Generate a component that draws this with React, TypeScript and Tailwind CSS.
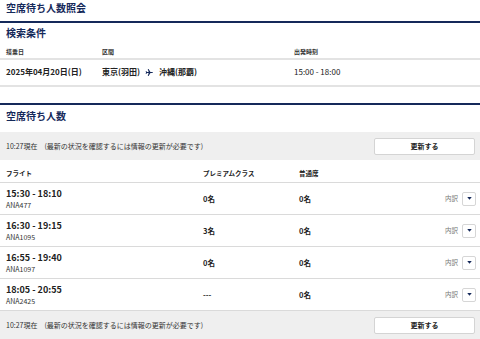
import React from "react";

const NAVY = "#15295a";

function Plane() {
  return (
    <svg width="9" height="9" viewBox="0 0 24 24" className="mx-[5px]" aria-hidden>
      <path
        fill={NAVY}
        d="M21 12c0-.9-.8-1.4-1.6-1.4H14.6L9.4 2.5H7.3l2.5 8.1H5L3.4 8.2H1.8l1 3.8-1 3.8h1.6L5 13.4h4.8l-2.5 8.1h2.1l5.2-8.1h4.8c.8 0 1.6-.5 1.6-1.4z"
      />
    </svg>
  );
}

function Caret() {
  return (
    <div className="w-[14px] h-[14px] border border-[#d6d6d6] rounded-[2px] bg-white flex items-center justify-center">
      <svg width="5" height="3" viewBox="0 0 6 4" aria-hidden>
        <path d="M0 0h6L3 3.5z" fill={NAVY} />
      </svg>
    </div>
  );
}

function UpdateBar() {
  return (
    <div className="h-[28px] bg-[#efefef] flex items-center justify-between pl-[6px] pr-[5px]">
      <span className="text-[7px] leading-[8px] text-[#333]">
        10:27現在　(最新の状況を確認するには情報の更新が必要です)
      </span>
      <button className="w-[101px] h-[17px] bg-white border border-[#d4d4d4] rounded-[2px] text-[7px] font-bold text-[#222] flex items-center justify-center">
        更新する
      </button>
    </div>
  );
}

const rows = [
  { time: "15:30 - 18:10", no: "ANA477", p: "0名", n: "0名" },
  { time: "16:30 - 19:15", no: "ANA1095", p: "3名", n: "0名" },
  { time: "16:55 - 19:40", no: "ANA1097", p: "0名", n: "0名" },
  { time: "18:05 - 20:55", no: "ANA2425", p: "---", n: "0名" },
];

export default function App() {
  return (
    <div
      className="w-[480px] h-[339px] overflow-hidden bg-white text-[#222]"
      style={{ fontFamily: '"Noto Sans CJK JP", "Noto Sans", sans-serif' }}
    >
      <div className="h-[21px] pt-[2px] pl-[6px] text-[10px] leading-[12px] font-bold text-[#15295a]">
        空席待ち人数照会
      </div>
      <div className="h-[2px] bg-[#15295a]" />
      <div className="pt-[4px] pl-[6px] text-[10px] leading-[12px] font-bold text-[#15295a]">
        検索条件
      </div>
      <div className="flex pl-[6px] mt-[9px] h-[10px] text-[6px] leading-[8px] font-bold text-[#333]">
        <span className="w-[96px] shrink-0">搭乗日</span>
        <span className="w-[192px] shrink-0">区間</span>
        <span>出発時刻</span>
      </div>
      <div className="h-[2px] bg-[#e3e3e3]" />
      <div className="flex pl-[6px] pt-[7px] pb-[8px] text-[8px] leading-[10px]">
        <span className="w-[96px] shrink-0 font-bold">2025年04月20日(日)</span>
        <span className="w-[192px] shrink-0 font-bold flex items-center">
          東京(羽田)
          <Plane />
          沖縄(那覇)
        </span>
        <span>15:00 - 18:00</span>
      </div>
      <div className="h-[2px] bg-[#e3e3e3]" />
      <div className="h-[16px]" />
      <div className="h-[2px] bg-[#15295a]" />
      <div className="pt-[5px] pl-[6px] text-[10px] leading-[12px] font-bold text-[#15295a]">
        空席待ち人数
      </div>
      <div className="mt-[10px]">
        <UpdateBar />
      </div>
      <div className="flex pl-[6px] h-[23px] pt-[9px] border-b border-[#dadada] text-[6.5px] leading-[8px] font-bold">
        <span className="w-[197px] shrink-0">フライト</span>
        <span className="w-[96px] shrink-0">プレミアムクラス</span>
        <span>普通席</span>
      </div>
      {rows.map((r) => (
        <div
          key={r.no}
          className="flex items-center pl-[6px] pr-[4px] h-[32px] border-b border-[#dadada]"
        >
          <div className="w-[197px] shrink-0 flex flex-col">
            <span className="text-[9px] leading-[12px] font-bold">{r.time}</span>
            <span className="text-[7px] leading-[8px] mt-[1px] text-[#333]">{r.no}</span>
          </div>
          <span className="w-[96px] shrink-0 text-[7.5px] font-bold">{r.p}</span>
          <span className="flex-1 text-[7.5px] font-bold">{r.n}</span>
          <div className="flex items-center gap-[4px]">
            <span className="text-[6.5px] text-[#777]">内訳</span>
            <Caret />
          </div>
        </div>
      ))}
      <UpdateBar />
    </div>
  );
}
